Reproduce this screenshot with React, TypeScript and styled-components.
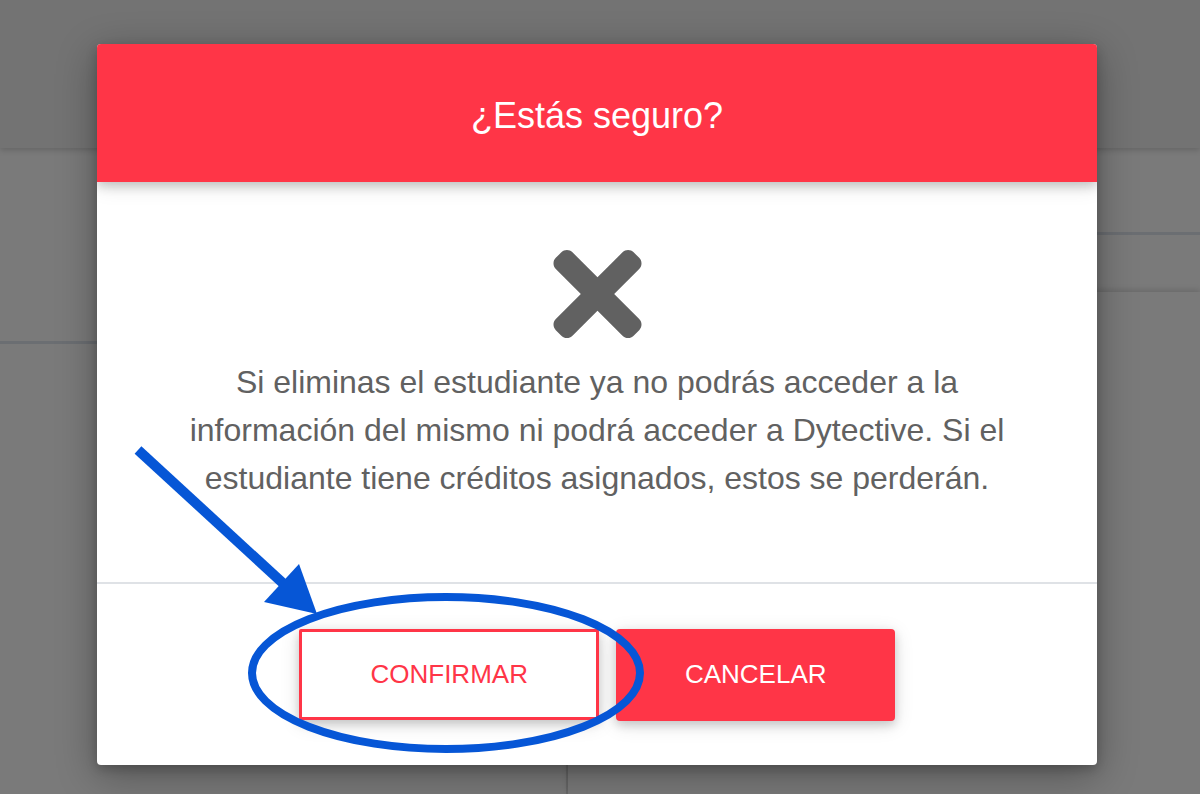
import React from "react";
import styled, { createGlobalStyle } from "styled-components";

const GlobalStyle = createGlobalStyle`
  html, body {
    margin: 0;
    padding: 0;
    width: 1200px;
    height: 794px;
    overflow: hidden;
    background: #7a7a7a;
    font-family: "Liberation Sans", Arial, sans-serif;
  }
  * { box-sizing: border-box; }
`;

const Page = styled.div`
  position: relative;
  width: 1200px;
  height: 794px;
  display: flex;
  flex-direction: column;
  background: #7a7a7a;
  overflow: hidden;
`;

const TopBar = styled.div`
  height: 148px;
  flex: none;
  background: #737373;
  box-shadow: 0 2px 6px rgba(0, 0, 0, 0.18);
  position: relative;
  z-index: 1;
`;

const Content = styled.div`
  flex: 1;
  display: grid;
  grid-template-columns: 568px 1fr;
`;

const LeftColumn = styled.div`
  display: flex;
  flex-direction: column;
  border-right: 2px solid #6c6c6c;
`;

const RightColumn = styled.div`
  display: flex;
  flex-direction: column;
`;

const Block = styled.div<{ $h: number; $line?: boolean }>`
  height: ${(p) => p.$h}px;
  flex: none;
  border-bottom: ${(p) => (p.$line ? "3px solid #6b6e72" : "none")};
`;

const Fill = styled.div`
  flex: 1;
  box-shadow: 0 -2px 6px rgba(0, 0, 0, 0.14);
`;

const Modal = styled.div`
  position: absolute;
  left: 97px;
  top: 44px;
  width: 1000px;
  background: #fff;
  border-radius: 4px;
  box-shadow: 0 10px 40px rgba(0, 0, 0, 0.32), 0 4px 12px rgba(0, 0, 0, 0.2);
  display: flex;
  flex-direction: column;
  overflow: hidden;
  z-index: 2;
`;

const Header = styled.div`
  background: #ff3547;
  height: 138px;
  padding-top: 6px;
  display: flex;
  align-items: center;
  justify-content: center;
  box-shadow: 0 4px 10px rgba(0, 0, 0, 0.18), 0 4px 20px rgba(0, 0, 0, 0.12);
  position: relative;
  z-index: 1;
`;

const Title = styled.h4`
  margin: 0;
  color: #fff;
  font-family: "Liberation Sans", Arial, sans-serif;
  font-weight: 400;
  font-size: 36px;
  line-height: 54px;
`;

const Body = styled.div`
  display: flex;
  flex-direction: column;
  align-items: center;
  padding: 68px 70px 80px;
`;

const IconWrap = styled.div`
  width: 89px;
  height: 88px;
  color: #616161;
  margin-bottom: 20px;
  display: flex;
`;

const Message = styled.p`
  margin: 0;
  text-align: center;
  color: #616161;
  font-size: 32px;
  line-height: 48px;
  font-weight: 400;
`;

const Divider = styled.hr`
  margin: 0;
  border: none;
  border-top: 2px solid #dfe2e6;
`;

const Footer = styled.div`
  height: 181px;
  display: flex;
  align-items: center;
  justify-content: center;
  gap: 17px;
`;

const Button = styled.button<{ $outline?: boolean }>`
  height: ${(p) => (p.$outline ? "91px" : "92px")};
  padding: 0 68.5px;
  font-family: "Liberation Sans", Arial, sans-serif;
  font-size: 26px;
  line-height: 39px;
  font-weight: 400;
  text-transform: uppercase;
  border-radius: ${(p) => (p.$outline ? "2px" : "4px")};
  border: ${(p) => (p.$outline ? "3px solid #ff3547" : "none")};
  background: ${(p) => (p.$outline ? "#fff" : "#ff3547")};
  color: ${(p) => (p.$outline ? "#ff3547" : "#fff")};
  box-shadow: 0 4px 10px rgba(0, 0, 0, 0.16), 0 4px 20px rgba(0, 0, 0, 0.12);
  cursor: pointer;
`;

const Annotation = styled.svg`
  position: absolute;
  left: 0;
  top: 0;
  width: 1200px;
  height: 794px;
  pointer-events: none;
  z-index: 3;
`;

const TimesIcon = () => (
  <svg viewBox="0 80 352 352" width="89" height="88" fill="currentColor">
    <path d="M242.72 256l100.07-100.07c12.280-12.28 12.28-32.19 0-44.48l-22.24-22.24c-12.28-12.28-32.19-12.28-44.48 0L176 189.28 75.93 89.21c-12.28-12.28-32.19-12.28-44.48 0L9.21 111.45c-12.28 12.28-12.28 32.19 0 44.48L109.28 256 9.21 356.07c-12.28 12.28-12.28 32.19 0 44.48l22.24 22.24c12.28 12.28 32.2 12.28 44.48 0L176 322.72l100.07 100.07c12.28 12.28 32.2 12.28 44.48 0l22.24-22.24c12.28-12.28 12.28-32.19 0-44.48L242.72 256z" />
  </svg>
);

export default function App() {
  return (
    <>
      <GlobalStyle />
      <Page>
        <TopBar />
        <Content>
          <LeftColumn>
            <Block $h={196} $line />
          </LeftColumn>
          <RightColumn>
            <Block $h={87} $line />
            <Block $h={57} />
            <Fill />
          </RightColumn>
        </Content>

        <Modal>
          <Header>
            <Title>¿Estás seguro?</Title>
          </Header>
          <Body>
            <IconWrap>
              <TimesIcon />
            </IconWrap>
            <Message>
              Si eliminas el estudiante ya no podrás acceder a la información del mismo ni podrá
              acceder a Dytective. Si el estudiante tiene créditos asignados, estos se perderán.
            </Message>
          </Body>
          <Divider />
          <Footer>
            <Button $outline>Confirmar</Button>
            <Button>Cancelar</Button>
          </Footer>
        </Modal>

        <Annotation viewBox="0 0 1200 794">
          <line x1="138" y1="450" x2="286" y2="586" stroke="#0656d6" strokeWidth="10" />
          <polygon points="264,602 299,564 317,614" fill="#0656d6" />
          <ellipse cx="446" cy="673" rx="194" ry="76" fill="none" stroke="#0656d6" strokeWidth="8" />
        </Annotation>
      </Page>
    </>
  );
}
